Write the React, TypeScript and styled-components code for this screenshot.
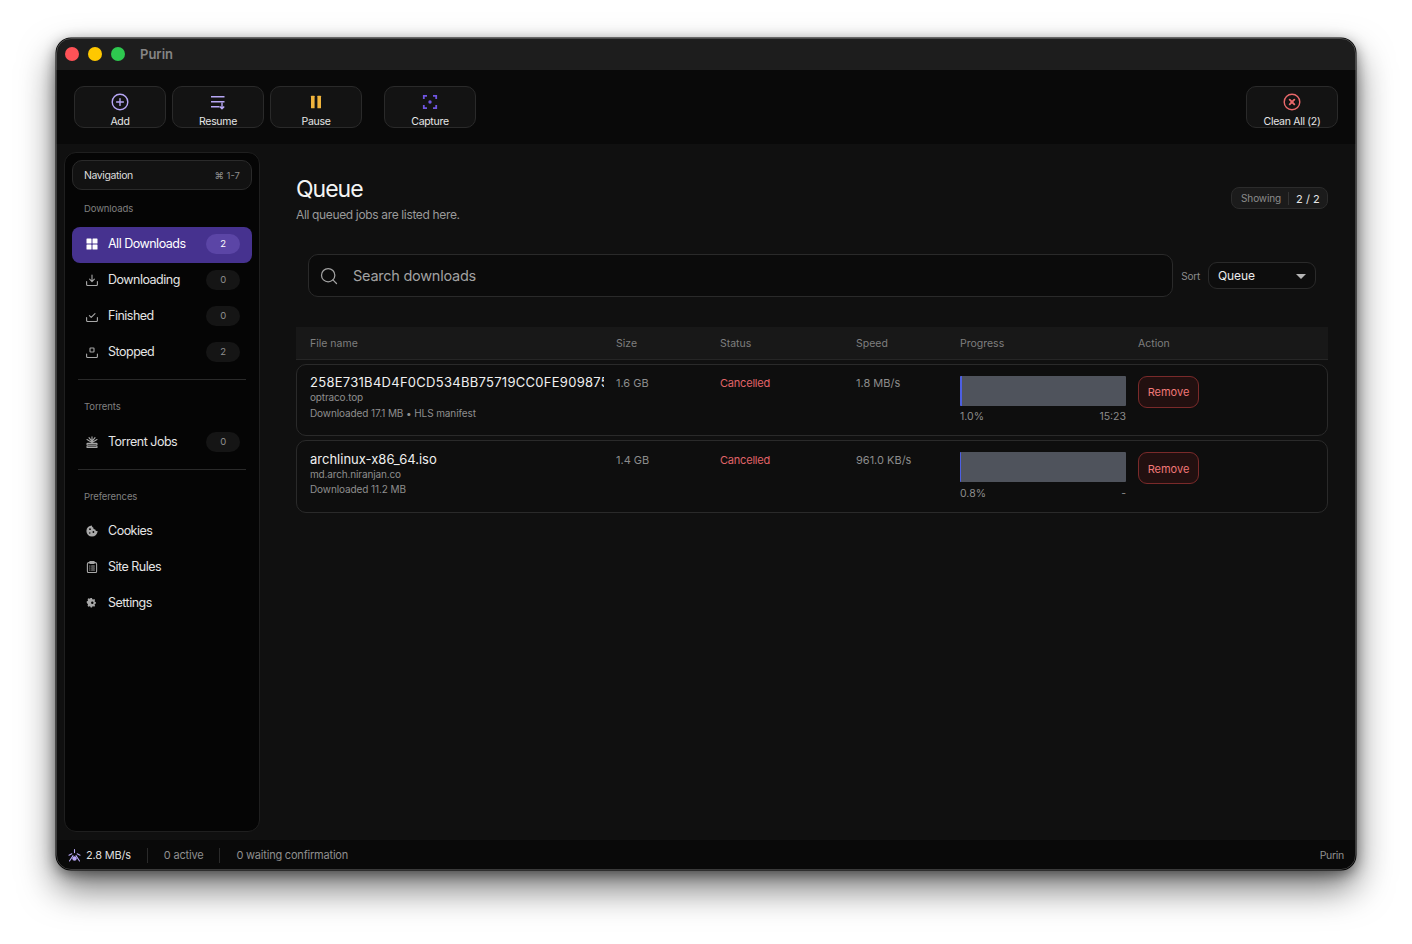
import React from 'react'
import styled, { createGlobalStyle } from 'styled-components'
import { Search } from 'lucide-react'

const GlobalStyle = createGlobalStyle`
    html, body {
        margin: 0;
        padding: 0;
        background: #ffffff;
        font-family: Inter, "Noto Sans", sans-serif;
    }
    * {
        box-sizing: border-box;
    }
`

const Page = styled.div`
    width: 1412px;
    height: 944px;
    padding: 38px 56px 74px;
    overflow: hidden;
`

const Window = styled.div`
    position: relative;
    width: 1300px;
    height: 832px;
    display: flex;
    flex-direction: column;
    border-radius: 15px;
    overflow: hidden;
    background: #101010;
    box-shadow: 0 0 0 0.5px #000, 0 18px 36px rgba(0, 0, 0, 0.55), 0 4px 14px rgba(0, 0, 0, 0.45);
    &::after {
        content: '';
        position: absolute;
        inset: 0;
        border: 1px solid rgba(255, 255, 255, 0.2);
        border-radius: 15px;
        pointer-events: none;
    }
`

const TitleBar = styled.div`
    height: 32px;
    flex: none;
    display: flex;
    align-items: center;
    padding-left: 9px;
    background: #1d1d1d;
`

const Light = styled.span<{ $color: string }>`
    width: 14px;
    height: 14px;
    margin-right: 9px;
    border-radius: 50%;
    background: ${p => p.$color};
`

const AppTitle = styled.span`
    margin-left: 6px;
    font-size: 13px;
    font-weight: 600;
    color: #858585;
`

const Toolbar = styled.div`
    height: 74px;
    flex: none;
    display: flex;
    align-items: flex-start;
    gap: 6px;
    padding: 16px 18px;
    background: #090909;
`

const ToolButton = styled.button<{ $push?: string }>`
    width: 92px;
    height: 42px;
    display: flex;
    flex-direction: column;
    align-items: center;
    padding: 6px 0 0;
    margin-left: ${p => p.$push || '0'};
    border: 1px solid #2a2a2a;
    border-radius: 10px;
    background: #131313;
    color: #e6e6e6;
    font-family: inherit;
    font-size: 10.5px;
    line-height: 13px;
    letter-spacing: -0.3px;
    svg {
        display: block;
        flex: none;
        margin-bottom: 3.5px;
    }
`

const Body = styled.div`
    flex: 1;
    min-height: 0;
    display: flex;
`

const Sidebar = styled.aside`
    width: 196px;
    flex: none;
    margin: 8px 0 8px 8px;
    padding: 7px 7px;
    border: 1px solid #1f1f1f;
    border-radius: 12px;
    background: #050505;
`

const NavHeader = styled.div`
    height: 30px;
    display: flex;
    align-items: center;
    justify-content: space-between;
    padding: 0 11px;
    border: 1px solid #2a2a2a;
    border-radius: 10px;
    background: #121212;
    font-size: 10.5px;
    letter-spacing: -0.4px;
    color: #dedede;
`

const Shortcut = styled.span`
    font-size: 9.5px;
    letter-spacing: 0;
    color: #8d8d8d;
`

const SectionLabel = styled.div<{ $height?: number }>`
    height: ${p => p.$height || 37}px;
    display: flex;
    align-items: center;
    padding-left: 12px;
    font-size: 9.5px;
    letter-spacing: -0.1px;
    color: #808080;
`

const NavItem = styled.div<{ $active?: boolean }>`
    height: 36px;
    display: flex;
    align-items: center;
    padding: 0 12px 3px 14px;
    border-radius: 8px;
    background: ${p => (p.$active ? '#46328f' : 'transparent')};
    color: ${p => (p.$active ? '#ffffff' : '#e4e4e4')};
    font-size: 12.5px;
    letter-spacing: -0.5px;
    svg {
        flex: none;
        margin-right: 10px;
    }
`

const NavText = styled.span`
    flex: 1;
`

const Badge = styled.span<{ $active?: boolean }>`
    width: 34px;
    height: 20px;
    display: flex;
    align-items: center;
    justify-content: center;
    border-radius: 10px;
    background: ${p => (p.$active ? '#5b45a6' : '#151515')};
    color: ${p => (p.$active ? '#ffffff' : '#8f8f8f')};
    font-size: 9.5px;
`

const Divider = styled.div`
    height: 1px;
    margin: 8px 6px;
    background: #2a2a2a;
`

const Main = styled.main`
    flex: 1;
    min-width: 0;
    padding: 30px 28px 0 36px;
`

const Heading = styled.div`
    display: flex;
    align-items: center;
    justify-content: space-between;
`

const Title = styled.h1`
    margin: 0;
    font-size: 23px;
    line-height: 30px;
    font-weight: 400;
    color: #f4f4f4;
    letter-spacing: -1px;
`

const Subtitle = styled.p`
    margin: 3px 0 0;
    font-size: 12px;
    line-height: 16px;
    color: #9a9a9a;
    letter-spacing: -0.35px;
`

const ShowingPill = styled.div`
    height: 22px;
    width: 97px;
    margin-top: -1px;
    display: flex;
    align-items: center;
    padding-left: 9px;
    border: 1px solid #2c2c2c;
    border-radius: 8px;
    background: #1b1b1b;
    font-size: 10px;
    letter-spacing: -0.1px;
    color: #8c8c8c;
`

const PillValue = styled.span`
    margin-left: 7px;
    padding: 1px 0 0 7px;
    border-left: 1px solid #333;
    font-size: 11px;
    line-height: 12px;
    letter-spacing: 0;
    color: #e8e8e8;
`

const FilterRow = styled.div`
    display: flex;
    align-items: center;
    margin: 31px 12px 0;
`

const SearchBox = styled.div`
    flex: 1;
    height: 43px;
    display: flex;
    align-items: center;
    gap: 14px;
    padding-left: 10px;
    border: 1px solid #2a2a2a;
    border-radius: 10px;
    background: #0b0b0b;
    color: #a2a2a2;
    font-size: 14.5px;
    letter-spacing: -0.25px;
`

const SortLabel = styled.span`
    margin: 0 8px 0 8px;
    font-size: 10px;
    letter-spacing: -0.2px;
    color: #8c8c8c;
`

const SortSelect = styled.div`
    width: 108px;
    height: 27px;
    display: flex;
    align-items: center;
    justify-content: space-between;
    padding: 0 9px;
    border: 1px solid #2a2a2a;
    border-radius: 9px;
    background: #0d0d0d;
    color: #ececec;
    font-size: 12px;
    letter-spacing: -0.1px;
`

const Caret = styled.span`
    width: 0;
    height: 0;
    margin-top: 1px;
    border-left: 5px solid transparent;
    border-right: 5px solid transparent;
    border-top: 5px solid #b5b5b5;
`

const Columns = styled.div`
    display: grid;
    grid-template-columns: 294px 92px 124px 92px 166px auto;
    column-gap: 12px;
`

const TableHead = styled(Columns)`
    height: 33px;
    margin-top: 30px;
    padding: 0 14px;
    align-items: center;
    background: #181818;
    border-bottom: 1px solid #262626;
    font-size: 10.5px;
    color: #7f7f7f;
`

const Row = styled(Columns) <{ $height: number; $shift: number }>`
    --shift: ${p => p.$shift}px;
    height: ${p => p.$height}px;
    margin-top: 4px;
    padding: 11px 13px 0;
    border: 1px solid #2a2a2a;
    border-radius: 10px;
    background: #0e0e0e;
`

const NameCell = styled.div`
    min-width: 0;
    margin-top: calc(var(--shift) - 1px);
`

const FileName = styled.div<{ $tracking: number }>`
    overflow: hidden;
    white-space: nowrap;
    font-size: 13px;
    line-height: 14px;
    letter-spacing: ${p => p.$tracking}px;
    color: #f0f0f0;
`

const Host = styled.div`
    margin-top: 1px;
    font-size: 10px;
    line-height: 14px;
    letter-spacing: -0.15px;
    color: #8f8f8f;
`

const Meta = styled.div`
    margin-top: calc(2px - var(--shift));
    font-size: 10px;
    line-height: 14px;
    letter-spacing: -0.1px;
    color: #8f8f8f;
`

const Cell = styled.div`
    margin-top: var(--shift);
    font-size: 11px;
    line-height: 14px;
    color: #8c8c8c;
`

const StatusCell = styled(Cell)`
    letter-spacing: -0.2px;
    color: #e06468;
`

const ProgressTrack = styled.div`
    height: 30px;
    border-radius: 1px;
    overflow: hidden;
    background: #4f535c;
`

const ProgressFill = styled.div`
    height: 100%;
    background: #4d5fe3;
`

const ProgressMeta = styled.div`
    display: flex;
    justify-content: space-between;
    margin-top: calc(4px + var(--shift));
    font-size: 10.5px;
    line-height: 13px;
    color: #8c8c8c;
`

const RemoveButton = styled.button`
    width: 61px;
    height: 32px;
    padding: calc(var(--shift) * 2) 0 0;
    border: 1px solid #7a2a2a;
    border-radius: 9px;
    background: #221010;
    color: #f07878;
    font-family: inherit;
    font-size: 11px;
`

const StatusBar = styled.footer`
    height: 30px;
    flex: none;
    display: flex;
    align-items: center;
    padding: 0 12px;
    background: #090909;
    font-size: 11px;
    letter-spacing: -0.2px;
    color: #8f8f8f;
`

const StatusItem = styled.span<{ $strong?: boolean }>`
    display: flex;
    align-items: center;
    gap: 5px;
    padding-right: 16px;
    margin-right: 16px;
    border-right: 1px solid #2a2a2a;
    line-height: 15px;
    color: ${p => (p.$strong ? '#dedede' : '#8f8f8f')};
`

const StatusPlain = styled.span`
    flex: 1;
`

const Brand = styled.span`
    font-size: 10.5px;
    letter-spacing: -0.3px;
    color: #8f8f8f;
`

const AddIcon = () => (
    <svg width="18" height="18" viewBox="0 0 18 18" fill="none" stroke="#b7a7f5" strokeWidth="1.4" strokeLinecap="round">
        <circle cx="9" cy="9" r="7.8" />
        <path d="M9 5.6v6.8M5.6 9h6.8" />
    </svg>
)

const ResumeIcon = () => (
    <svg width="18" height="18" viewBox="0 0 18 18" fill="none" stroke="#b7a7f5" strokeWidth="1.4" strokeLinejoin="round">
        <path d="M2 3.7h13.5M2 8.7h13.5M2 13.7h8.5" />
        <path d="M13 9.5v6M10.8 13.4l2.2 2.3 2.2-2.3" />
    </svg>
)

const PauseIcon = () => (
    <svg width="18" height="18" viewBox="0 0 18 18" fill="#f0b43c">
        <rect x="4" y="2.8" width="3.6" height="12.4" rx="0.5" />
        <rect x="10.4" y="2.8" width="3.6" height="12.4" rx="0.5" />
    </svg>
)

const CaptureIcon = () => (
    <svg width="18" height="18" viewBox="0 0 18 18" fill="none" stroke="#6f55e0" strokeWidth="1.8">
        <path d="M6 2.8H2.800V6M12 2.8h3.200V6M6 15.2H2.800V12M12 15.2h3.200V12" />
        <circle cx="9" cy="9" r="1.7" fill="#6f55e0" stroke="none" />
    </svg>
)

const CleanIcon = () => (
    <svg width="18" height="18" viewBox="0 0 18 18" fill="none" stroke="#e8686a" strokeWidth="1.4" strokeLinecap="round">
        <circle cx="9" cy="9" r="7.8" />
        <path d="M6.7 6.7l4.6 4.6M11.3 6.7l-4.6 4.6" strokeWidth="1.9" />
    </svg>
)

const GridIcon = () => (
    <svg width="12" height="12" viewBox="0 0 12 12" fill="#ffffff">
        <rect x="0.5" y="0.5" width="5" height="5" rx="0.6" />
        <rect x="6.5" y="0.5" width="5" height="5" rx="0.6" />
        <rect x="0.5" y="6.5" width="5" height="5" rx="0.6" />
        <rect x="6.5" y="6.5" width="5" height="5" rx="0.6" />
    </svg>
)

const NavSvg = ({ children }: { children: React.ReactNode }) => (
    <svg width="12" height="12" viewBox="0 0 12 12" fill="none" stroke="#a8a8a8" strokeWidth="1.1" strokeLinecap="round" strokeLinejoin="round">
        {children}
    </svg>
)

const DownloadingIcon = () => (
    <NavSvg>
        <path d="M0.6 7.5v3a1 1 0 0 0 1 1h8.8a1 1 0 0 0 1-1v-3" />
        <path d="M6 1v6.4M3.6 5.2L6 7.6l2.4-2.4" />
    </NavSvg>
)

const FinishedIcon = () => (
    <NavSvg>
        <path d="M0.6 7.5v3a1 1 0 0 0 1 1h8.8a1 1 0 0 0 1-1v-3" />
        <path d="M3.4 5.6L5.2 7.4 9 3.6" />
    </NavSvg>
)

const StoppedIcon = () => (
    <NavSvg>
        <path d="M0.6 8v2.5a1 1 0 0 0 1 1h8.8a1 1 0 0 0 1-1V8" />
        <rect x="4" y="2" width="4" height="4" rx="0.6" />
    </NavSvg>
)

const TorrentIcon = () => (
    <NavSvg>
        <path d="M6 0.8v5M3 1.6L6 5.4 9 1.6M1 3.6L6 6.4l5-2.8" />
        <rect x="1" y="7.4" width="10" height="1.6" rx="0.4" />
        <rect x="1" y="10" width="10" height="1.6" rx="0.4" />
    </NavSvg>
)

const CookieIcon = () => (
    <svg width="12" height="12" viewBox="0 0 12 12">
        <path d="M6 0.4a5.6 5.6 0 1 0 5.6 5.6c-1.3.3-2.2-.5-2.3-1.6C8 4.5 7.2 3.5 7.3 2.4 6.3 2.2 5.9 1.3 6 .4z" fill="#a8a8a8" />
        <circle cx="4" cy="4.2" r="0.9" fill="#050505" />
        <circle cx="7.4" cy="7" r="0.9" fill="#050505" />
        <circle cx="3.8" cy="8" r="0.7" fill="#050505" />
    </svg>
)

const RulesIcon = () => (
    <NavSvg>
        <rect x="1.4" y="1.6" width="9.2" height="10" rx="1.4" />
        <rect x="3.8" y="0.5" width="4.4" height="2" rx="0.5" />
        <path d="M3.6 5h.4M5.6 5h2.8M3.6 7h.4M5.6 7h2.8M3.6 9h.4M5.6 9h2.8" />
    </NavSvg>
)

const SettingsIcon = () => (
    <svg width="12" height="12" viewBox="0 0 12 12">
        <path d="M5 1h1.6l.3 1.2 1.1.5 1.1-.6 1 1.1-.6 1.1.4 1 1.1.4v1.5l-1.1.4-.4 1 .6 1.1-1 1.1-1.1-.6-1.1.5-.3 1H5l-.3-1-1.1-.5-1.1.6-1-1.1.6-1.1-.4-1L.6 6.2V4.700l1.100-.4.400-1-.6-1.100 1-1.100 1.100.6 1.100-.5z" fill="#a8a8a8" transform="translate(0.2 0.2) scale(0.88)" />
        <circle cx="6.3" cy="5.7" r="1.2" fill="#050505" />
    </svg>
)

const SpeedIcon = () => (
    <svg width="13" height="13" viewBox="0 0 13 13" fill="none" stroke="#b7a7f5" strokeWidth="1.1" strokeLinecap="round">
        <path d="M6.5 0.6v3M1 6.2l2.8-1.4M12 6.2L9.2 4.8M5 6.6L1.5 12M8 6.6L11.5 12" />
        <circle cx="6.5" cy="9.5" r="2.2" fill="#b7a7f5" stroke="none" />
    </svg>
)

const downloadItems = [
    { label: 'All Downloads', count: 2, icon: <GridIcon />, active: true },
    { label: 'Downloading', count: 0, icon: <DownloadingIcon /> },
    { label: 'Finished', count: 0, icon: <FinishedIcon /> },
    { label: 'Stopped', count: 2, icon: <StoppedIcon /> },
]

const jobs = [
    {
        name: '258E731B4D4F0CD534BB75719CC0FE909875A3C1',
        tracking: 0.28,
        host: 'optraco.top',
        meta: 'Downloaded 17.1 MB • HLS manifest',
        size: '1.6 GB',
        speed: '1.8 MB/s',
        percent: 1.0,
        eta: '15:23',
        height: 72,
        shift: 0,
    },
    {
        name: 'archlinux-x86_64.iso',
        tracking: 0,
        host: 'md.arch.niranjan.co',
        meta: 'Downloaded 11.2 MB',
        size: '1.4 GB',
        speed: '961.0 KB/s',
        percent: 0.8,
        eta: '-',
        height: 73,
        shift: 1,
    },
]

export default function App() {
    return (
        <Page>
            <GlobalStyle />
            <Window>
                <TitleBar>
                    <Light $color="#ff5257" />
                    <Light $color="#ffc800" />
                    <Light $color="#2ec84f" />
                    <AppTitle>Purin</AppTitle>
                </TitleBar>

                <Toolbar>
                    <ToolButton><AddIcon />Add</ToolButton>
                    <ToolButton><ResumeIcon />Resume</ToolButton>
                    <ToolButton><PauseIcon />Pause</ToolButton>
                    <ToolButton $push="16px"><CaptureIcon />Capture</ToolButton>
                    <ToolButton $push="auto"><CleanIcon />Clean All (2)</ToolButton>
                </Toolbar>

                <Body>
                    <Sidebar>
                        <NavHeader>
                            Navigation
                            <Shortcut>⌘ 1-7</Shortcut>
                        </NavHeader>
                        <SectionLabel>Downloads</SectionLabel>
                        {downloadItems.map(item => (
                            <NavItem key={item.label} $active={item.active}>
                                {item.icon}
                                <NavText>{item.label}</NavText>
                                <Badge $active={item.active}>{item.count}</Badge>
                            </NavItem>
                        ))}
                        <Divider />
                        <SectionLabel>Torrents</SectionLabel>
                        <NavItem>
                            <TorrentIcon />
                            <NavText>Torrent Jobs</NavText>
                            <Badge>0</Badge>
                        </NavItem>
                        <Divider />
                        <SectionLabel $height={36}>Preferences</SectionLabel>
                        <NavItem><CookieIcon /><NavText>Cookies</NavText></NavItem>
                        <NavItem><RulesIcon /><NavText>Site Rules</NavText></NavItem>
                        <NavItem><SettingsIcon /><NavText>Settings</NavText></NavItem>
                    </Sidebar>

                    <Main>
                        <Heading>
                            <div>
                                <Title>Queue</Title>
                                <Subtitle>All queued jobs are listed here.</Subtitle>
                            </div>
                            <ShowingPill>
                                Showing
                                <PillValue>2 / 2</PillValue>
                            </ShowingPill>
                        </Heading>

                        <FilterRow>
                            <SearchBox>
                                <Search size={20} color="#a2a2a2" strokeWidth={1.5} />
                                Search downloads
                            </SearchBox>
                            <SortLabel>Sort</SortLabel>
                            <SortSelect>
                                Queue
                                <Caret />
                            </SortSelect>
                        </FilterRow>

                        <TableHead>
                            <span>File name</span>
                            <span>Size</span>
                            <span>Status</span>
                            <span>Speed</span>
                            <span>Progress</span>
                            <span>Action</span>
                        </TableHead>

                        {jobs.map(job => (
                            <Row key={job.host} $height={job.height} $shift={job.shift}>
                                <NameCell>
                                    <FileName $tracking={job.tracking}>{job.name}</FileName>
                                    <Host>{job.host}</Host>
                                    <Meta>{job.meta}</Meta>
                                </NameCell>
                                <Cell>{job.size}</Cell>
                                <StatusCell>Cancelled</StatusCell>
                                <Cell>{job.speed}</Cell>
                                <div>
                                    <ProgressTrack>
                                        <ProgressFill style={{ width: `${job.percent}%` }} />
                                    </ProgressTrack>
                                    <ProgressMeta>
                                        <span>{job.percent.toFixed(1)}%</span>
                                        <span>{job.eta}</span>
                                    </ProgressMeta>
                                </div>
                                <div><RemoveButton>Remove</RemoveButton></div>
                            </Row>
                        ))}
                    </Main>
                </Body>

                <StatusBar>
                    <StatusItem $strong><SpeedIcon />2.8 MB/s</StatusItem>
                    <StatusItem>0 active</StatusItem>
                    <StatusPlain>0 waiting confirmation</StatusPlain>
                    <Brand>Purin</Brand>
                </StatusBar>
            </Window>
        </Page>
    )
}
